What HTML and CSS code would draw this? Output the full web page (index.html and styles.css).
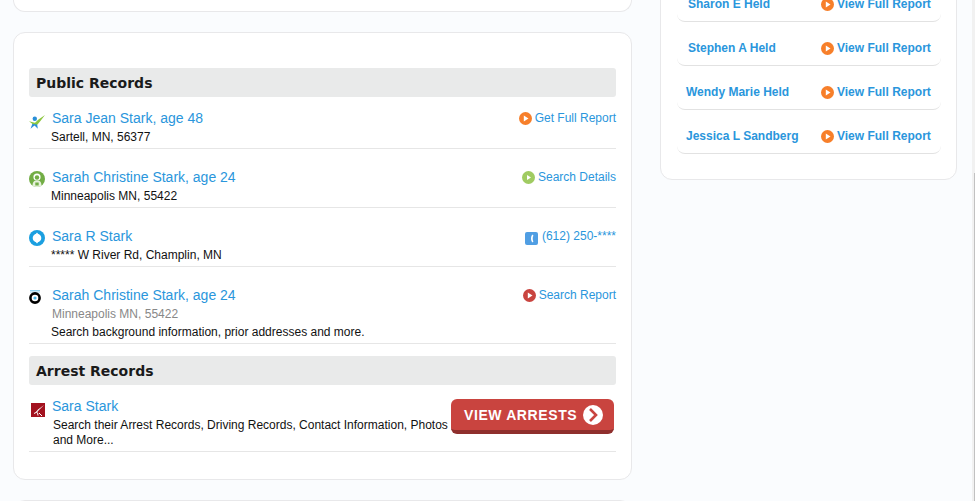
FILE: index.html
```html
<!DOCTYPE html>
<html lang="en">
<head>
<meta charset="utf-8">
<title>Public Records</title>
<link rel="stylesheet" href="styles.css">
</head>
<body>
<div class="page">
  <main class="left">
    <div class="card card-stub"></div>
    <section class="card card-main">
      <h2 class="head">Public Records</h2>
      <div class="row row-first">
        <div class="ico ico-a"><svg width="16" height="15" viewBox="0 0 16 15"><circle cx="5.800" cy="4.800" r="2.200" fill="#2a8fd8"/><path d="M3.500 9.500 1.500 14.800 5.500 11.500 8.800 14.800 8 9z" fill="#2a8fd8"/><path d="M0 7.200 6 8.800 9.500 5.500 16 1 11 7.500 8.500 10.500 3.500 10z" fill="#8cc63f"/></svg></div>
        <div class="body"><a class="name">Sara Jean Stark, age 48</a><p class="sub">Sartell, MN, 56377</p></div>
        <a class="act"><svg class="play" viewBox="0 0 13 13"><circle cx="6.500" cy="6.500" r="6.500" fill="#f77f2a"/><path d="M4.800 3.500v6l4.700-3z" fill="#fff"/></svg>Get Full Report</a>
      </div>
      <div class="row">
        <div class="ico ico-b"><svg width="16" height="16" viewBox="0 0 16 16"><circle cx="8" cy="8" r="8" fill="#72ad45"/><circle cx="8" cy="6" r="3.600" fill="#fff"/><circle cx="8" cy="6.500" r="2.200" fill="#72ad45"/><path d="M3.500 15c0-3.500 1-5.500 4.500-5.500s4.500 2 4.500 5.500c-2.500 1.300-6.500 1.300-9 0z" fill="#e6f0dc"/><rect x="6.300" y="11.500" width="3.400" height="3" fill="#72ad45"/></svg></div>
        <div class="body"><a class="name">Sarah Christine Stark, age 24</a><p class="sub">Minneapolis MN, 55422</p></div>
        <a class="act"><svg class="play" viewBox="0 0 13 13"><circle cx="6.500" cy="6.500" r="6.500" fill="#a0cb62"/><path d="M5 4v5l4-2.500z" fill="#fff"/></svg>Search Details</a>
      </div>
      <div class="row">
        <div class="ico ico-c"><svg width="16" height="16" viewBox="0 0 16 16"><circle cx="8" cy="8" r="8" fill="#1b9fe0"/><circle cx="8" cy="8" r="4.300" fill="#fff"/><path d="M8 2.600 9.500 4.500h-3zM8 13.400 9.500 11.500h-3z" fill="#fff"/></svg></div>
        <div class="body"><a class="name">Sara R Stark</a><p class="sub">***** W River Rd, Champlin, MN</p></div>
        <a class="act act-phone"><svg class="phone" viewBox="0 0 13 13"><rect width="13" height="13" rx="2" fill="#509ee3"/><path d="M7.500 2.500C5.500 4 5.500 9 7.500 10.500l1-1.200C7.500 8.500 7.500 4.500 8.500 3.700z" fill="#fff"/></svg>(612) 250-****</a>
      </div>
      <div class="row">
        <div class="ico ico-d"><svg width="12" height="14" viewBox="0 0 12 14"><path d="M1 .5h10M1 2h10" stroke="#8fd0ee" stroke-width="1"/><circle cx="6" cy="8" r="4.600" fill="#fff" stroke="#000" stroke-width="2.600"/><circle cx="6" cy="8" r="1.600" fill="#47b4e6"/></svg></div>
        <div class="body"><a class="name">Sarah Christine Stark, age 24</a><p class="sub sub-grey">Minneapolis MN, 55422</p><p class="sub">Search background information, prior addresses and more.</p></div>
        <a class="act"><svg class="play" viewBox="0 0 13 13"><circle cx="6.500" cy="6.500" r="6.500" fill="#c9443f"/><path d="M4.800 3.500v6l4.700-3z" fill="#fff"/></svg>Search Report</a>
      </div>
      <h2 class="head head-second">Arrest Records</h2>
      <div class="row row-arrest">
        <div class="ico ico-e"><svg width="14" height="14" viewBox="0 0 14 14"><rect width="14" height="14" fill="#a3121f"/><path d="M13 2 7 6.500 4.500 9.500 6.300 9 8 7z" fill="#fff"/><path d="M6 9 3 10.500M6.500 9.500 7 12.500M8 10l3 3" stroke="#fff" stroke-width="1" fill="none"/></svg></div>
        <div class="body"><a class="name">Sara Stark</a><p class="sub sub-arrest">Search their Arrest Records, Driving Records, Contact Information, Photos and More...</p></div>
        <a class="btn">VIEW ARRESTS<svg class="chev" viewBox="0 0 20 20"><circle cx="10" cy="10" r="10" fill="#fff"/><path d="M7 4l6 6-6 6" fill="none" stroke="#c9443f" stroke-width="2.600"/></svg></a>
      </div>
    </section>
    <div class="card card-next"></div>
  </main>
  <aside class="card side">
    <div class="rel"><span class="rel-name">Sharon E Held</span><a class="rel-link"><svg class="play" viewBox="0 0 13 13"><circle cx="6.500" cy="6.500" r="6.500" fill="#f77f2a"/><path d="M4.800 3.500v6l4.700-3z" fill="#fff"/></svg>View Full Report</a></div>
    <div class="rel"><span class="rel-name">Stephen A Held</span><a class="rel-link"><svg class="play" viewBox="0 0 13 13"><circle cx="6.500" cy="6.500" r="6.500" fill="#f77f2a"/><path d="M4.800 3.500v6l4.700-3z" fill="#fff"/></svg>View Full Report</a></div>
    <div class="rel"><span class="rel-name rel-wide">Wendy Marie Held</span><a class="rel-link"><svg class="play" viewBox="0 0 13 13"><circle cx="6.500" cy="6.500" r="6.500" fill="#f77f2a"/><path d="M4.800 3.500v6l4.700-3z" fill="#fff"/></svg>View Full Report</a></div>
    <div class="rel"><span class="rel-name rel-wide">Jessica L Sandberg</span><a class="rel-link"><svg class="play" viewBox="0 0 13 13"><circle cx="6.500" cy="6.500" r="6.500" fill="#f77f2a"/><path d="M4.800 3.500v6l4.700-3z" fill="#fff"/></svg>View Full Report</a></div>
  </aside>
</div>
<div class="scrollbar"><div class="thumb"></div></div>
</body>
</html>
```
FILE: styles.css
```css
* { box-sizing: border-box; }
html, body { margin: 0; height: 100%; overflow: hidden; }
body { background: #fafcfe; font-family: "Liberation Sans", Arial, sans-serif; color: #111; }
a { color: #2a96dc; text-decoration: none; }
p { margin: 0; }

.page { display: flex; align-items: flex-start; gap: 28px; padding-left: 13px; }
.left { width: 619px; flex: none; display: flex; flex-direction: column; gap: 20px; }

.card { background: #fff; border: 1px solid #e8e8ea; border-radius: 12px; }
.card-stub { height: 12px; border-top: 0; border-radius: 0 0 12px 12px; }
.card-main { height: 448px; padding: 35px 15px 0; }
.card-next { height: 40px; }

.head { margin: 0; height: 29px; padding: 1px 0 0 7px; background: #e9eaea; border-radius: 3px; font: bold 14px/29px "DejaVu Sans", sans-serif; color: #1a1a1a; }
.head-second { margin-top: 12px; }

.row { display: flex; align-items: flex-start; padding: 19px 0 2px; border-bottom: 1px solid #e6e6e6; }
.row-first { padding-top: 12px; }
.row-arrest { padding: 12px 0 3px; }

.ico { width: 23px; flex: none; display: flex; }
.ico svg { display: block; }
.ico-a { margin-top: 5px; }
.ico-b { margin-top: 3px; }
.ico-c { margin-top: 3px; }
.ico-d { margin-top: 4px; }
.ico-e { margin-top: 6px; padding-left: 2px; }

.body { flex: 1; min-width: 0; }
.name { display: block; margin-bottom: 1px; font-size: 14px; line-height: 18px; }
.sub { margin-left: -1px; font-size: 12px; line-height: 18px; color: #111; }
.sub-grey { margin-left: 0; color: #888; }
.sub-arrest { margin: 3px 0 0 1px; width: 400px; line-height: 15px; }

.act { display: flex; align-items: center; gap: 3px; font-size: 12px; line-height: 18px; }
.act-phone { gap: 4px; }
.play { width: 13px; height: 13px; flex: none; margin-top: 1px; }
.phone { width: 13px; height: 13px; flex: none; margin-top: 4px; }

.btn { display: flex; align-items: center; justify-content: space-between; flex: none; width: 163px; height: 35px; margin: 2px 2px 0 0; padding: 0 11px 0 13px; background: #c9443f; border-bottom: 4px solid #8f2f2d; border-radius: 6px; color: #fff; font-size: 14px; font-weight: bold; letter-spacing: .6px; white-space: nowrap; }
.chev { width: 20px; height: 20px; flex: none; }

.side { width: 297px; flex: none; margin-top: -23px; padding: 0 15px 25px 16px; }
.rel { display: flex; align-items: center; justify-content: space-between; height: 44px; padding: 8px 10px 0 11px; border-bottom: 1px solid #e2e2e2; border-radius: 0 0 8px 8px; font-size: 12px; font-weight: bold; }
.rel-name { color: #2a96dc; }
.rel-wide { margin-left: -2px; }
.rel-link { display: flex; align-items: center; gap: 3px; width: 110px; }

.scrollbar { position: fixed; top: 0; right: 0; bottom: 0; width: 3px; background: #f1f1f1; }
.thumb { position: absolute; top: 173px; right: 0; bottom: 0; width: 1px; background: #c1c1c1; }
```
